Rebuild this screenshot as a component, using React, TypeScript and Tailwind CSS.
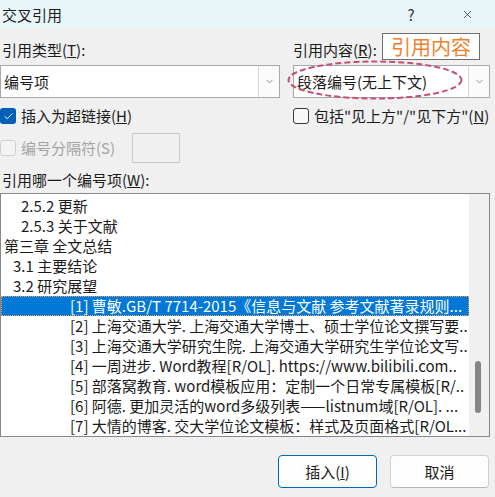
import { ChevronDown, X, Check } from "lucide-react";

const items = [
  { indent: "pl-[20px]", text: "2.5.2 更新" },
  { indent: "pl-[20px]", text: "2.5.3 关于文献" },
  { indent: "pl-[3px]", text: "第三章 全文总结" },
  { indent: "pl-[12px]", text: "3.1 主要结论" },
  { indent: "pl-[12px]", text: "3.2 研究展望" },
  { indent: "pl-[69px]", text: "[1] 曹敏.GB/T 7714-2015《信息与文献 参考文献著录规则...", selected: true },
  { indent: "pl-[69px]", text: "[2] 上海交通大学. 上海交通大学博士、硕士学位论文撰写要.." },
  { indent: "pl-[69px]", text: "[3] 上海交通大学研究生院. 上海交通大学研究生学位论文写.." },
  { indent: "pl-[69px]", text: "[4] 一周进步. Word教程[R/OL]. https://www.bilibili.com.." },
  { indent: "pl-[69px]", text: "[5] 部落窝教育. word模板应用：定制一个日常专属模板[R/.." },
  { indent: "pl-[69px]", text: "[6] 阿德. 更加灵活的word多级列表——listnum域[R/OL]. ..." },
  { indent: "pl-[69px]", text: "[7] 大情的博客. 交大学位论文模板：样式及页面格式[R/OL..." },
];

function Select({ value }: { value: string }) {
  return (
    <div className="flex h-[33px] w-full border border-[#a9a9a9] bg-white">
      <div className="flex flex-1 items-center pl-[3px] whitespace-nowrap">{value}</div>
      <div className="flex w-[21px] items-center justify-center border-l border-[#d4d4d4] bg-[#fbfbfb] text-[#5a5a5a]">
        <ChevronDown size={11} strokeWidth={1.4} />
      </div>
    </div>
  );
}

export default function App() {
  return (
    <div className="flex h-[497px] w-[495px] flex-col overflow-hidden bg-[#f0f0f0] font-['Noto_Sans_CJK_SC',sans-serif] text-[15px] leading-[18px] text-[#1b1b1b]">
      {/* Title bar */}
      <div className="flex h-[29px] items-center bg-[#e8f6f9] pl-[2px] pr-[21px]">
        <span>交叉引用</span>
        <span className="ml-auto w-[14px] text-center text-[#333]">?</span>
        <X size={13} strokeWidth={1.3} className="ml-[43px] text-[#222]" />
      </div>

      <div className="flex w-[490px] flex-col">
        {/* Labels */}
        <div className="grid h-[36px] grid-cols-[280px_197px] gap-x-[13px]">
          <div className="pl-[2px] pt-[12px]">
            引用类型(<u>T</u>):
          </div>
          <div className="flex items-start">
            <span className="pt-[12px]">
              引用内容(<u>R</u>):
            </span>
            <div className="ml-auto mr-[10px] mt-[4px] flex h-[27px] w-[98px] items-center justify-center border border-[#707070] bg-white text-[20px] text-[#f07f32]">
              引用内容
            </div>
          </div>
        </div>

        {/* Selects */}
        <div className="grid grid-cols-[280px_197px] gap-x-[13px]">
          <Select value="编号项" />
          <div className="relative">
            <Select value="段落编号(无上下文)" />
            <svg className="pointer-events-none absolute -left-[6px] -top-[5px]" width="177" height="40" viewBox="0 0 177 40">
              <ellipse cx="88" cy="20" rx="86.5" ry="18.5" fill="none" stroke="#c4526f" strokeWidth="2" strokeDasharray="6 3" />
            </svg>
          </div>
        </div>

        {/* Checkboxes */}
        <div className="mt-[9px] grid h-[16px] grid-cols-[280px_197px] gap-x-[13px]">
          <div className="flex items-center gap-[5px]">
            <span className="flex h-[16px] w-[16px] items-center justify-center rounded-[3px] bg-[#005fb8] text-white">
              <Check size={11} strokeWidth={2} />
            </span>
            <span>
              插入为超链接(<u>H</u>)
            </span>
          </div>
          <div className="flex items-center gap-[5px]">
            <span className="h-[16px] w-[16px] rounded-[3px] border border-[#3a3a3a] bg-[#f7f7f7]" />
            <span className="whitespace-nowrap">
              包括"见上方"/"见下方"(<u>N</u>)
            </span>
          </div>
        </div>

        {/* Separator (disabled) */}
        <div className="mt-[10px] flex h-[30px] items-center">
          <span className="h-[16px] w-[16px] rounded-[3px] border border-[#cfcfcf] bg-[#f3f3f3]" />
          <span className="ml-[5px] text-[#a3a3a3]">编号分隔符(S)</span>
          <div className="ml-[17px] h-[30px] w-[48px] border border-[#c9c9c9] bg-[#f0f0f0]" />
        </div>

        <div className="flex h-[30px] items-center pl-[2px] pt-[4px]">
          引用哪一个编号项(<u>W</u>):
        </div>

        {/* List box */}
        <div className="flex h-[244px] border border-[#828790] bg-white">
          <div className="flex-1 overflow-hidden pt-[2px]">
            {items.map((it) => (
              <div
                key={it.text}
                className={`h-[20px] overflow-hidden whitespace-nowrap leading-[20px] ${it.indent} ${
                  it.selected ? "bg-[#0078d7] text-white outline-1 -outline-offset-1 outline-dotted outline-[#e9a15a]" : ""
                }`}
              >
                {it.text}
              </div>
            ))}
          </div>
          <div className="relative w-[20px] bg-[#f0f0f0]">
            <div className="absolute left-[6px] top-[167px] h-[52px] w-[6px] rounded-[3px] bg-[#858585]" />
          </div>
        </div>
      </div>

      {/* Buttons */}
      <div className="mt-[18px] flex w-[489px] justify-end gap-[13px]">
        <button className="flex h-[33px] w-[99px] items-center justify-center rounded-[4px] border border-[#0067c0] bg-[#fdfdfd]">
          插入(<u>I</u>)
        </button>
        <button className="flex h-[33px] w-[99px] items-center justify-center rounded-[4px] border border-[#d0d0d0] border-b-[#b8b8b8] bg-[#fdfdfd]">
          取消
        </button>
      </div>
    </div>
  );
}
